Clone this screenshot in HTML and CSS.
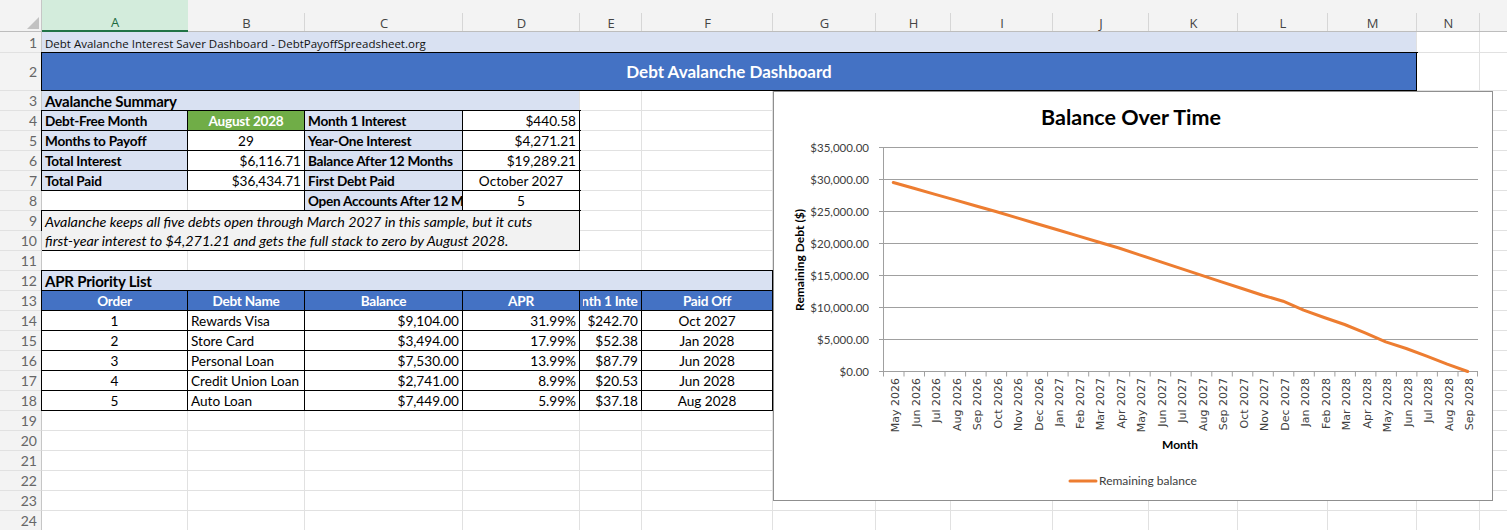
FILE: index.html
```html
<!DOCTYPE html>
<html lang="en">
<head>
  <meta charset="UTF-8">
  <title>Debt Avalanche Interest Saver Dashboard</title>
  <link rel="stylesheet" href="styles.css">
</head>
<body>
<div class="sheet">
  <table class="grid">
    <colgroup>
      <col class="c0"><col class="ca"><col class="cb"><col class="cc"><col class="cd"><col class="ce"><col class="cf"><col class="cg">
      <col class="ch"><col class="ci"><col class="cj"><col class="ck"><col class="cl"><col class="cm"><col class="cn"><col class="co">
    </colgroup>
    <tr class="colhead">
      <th class="corner"><span class="tri"></span></th>
      <th class="sel">A</th><th>B</th><th>C</th><th>D</th><th>E</th><th>F</th><th>G</th>
      <th>H</th><th>I</th><th>J</th><th>K</th><th>L</th><th>M</th><th>N</th><th></th>
    </tr>
    <tr class="r1">
      <th class="rh">1</th>
      <td colspan="13" class="lb caption">Debt Avalanche Interest Saver Dashboard - DebtPayoffSpreadsheet.org</td>
      <td></td><td></td>
    </tr>
    <tr class="r2">
      <th class="rh">2</th>
      <td colspan="13" class="banner bx">Debt Avalanche Dashboard</td>
      <td></td><td></td>
    </tr>
    <tr>
      <th class="rh">3</th>
      <td colspan="4" class="lb sec">Avalanche Summary</td>
      <td></td><td></td><td></td><td></td><td></td><td></td><td></td><td></td><td></td><td></td><td></td>
    </tr>
    <tr>
      <th class="rh">4</th>
      <td class="lb b bx">Debt-Free Month</td>
      <td class="good b ctr bx">August 2028</td>
      <td class="lb b bx">Month 1 Interest</td>
      <td class="num bx">$440.58</td>
      <td></td><td></td><td></td><td></td><td></td><td></td><td></td><td></td><td></td><td></td><td></td>
    </tr>
    <tr>
      <th class="rh">5</th>
      <td class="lb b bx">Months to Payoff</td>
      <td class="ctr bx">29</td>
      <td class="lb b bx">Year-One Interest</td>
      <td class="num bx">$4,271.21</td>
      <td></td><td></td><td></td><td></td><td></td><td></td><td></td><td></td><td></td><td></td><td></td>
    </tr>
    <tr>
      <th class="rh">6</th>
      <td class="lb b bx">Total Interest</td>
      <td class="num bx">$6,116.71</td>
      <td class="lb b bx">Balance After 12 Months</td>
      <td class="num bx">$19,289.21</td>
      <td></td><td></td><td></td><td></td><td></td><td></td><td></td><td></td><td></td><td></td><td></td>
    </tr>
    <tr>
      <th class="rh">7</th>
      <td class="lb b bx">Total Paid</td>
      <td class="num bx">$36,434.71</td>
      <td class="lb b bx">First Debt Paid</td>
      <td class="ctr bx">October 2027</td>
      <td></td><td></td><td></td><td></td><td></td><td></td><td></td><td></td><td></td><td></td><td></td>
    </tr>
    <tr>
      <th class="rh">8</th>
      <td></td><td></td>
      <td class="lb b bx">Open Accounts After 12 Months</td>
      <td class="ctr bx">5</td>
      <td></td><td></td><td></td><td></td><td></td><td></td><td></td><td></td><td></td><td></td><td></td>
    </tr>
    <tr>
      <th class="rh">9</th>
      <td colspan="4" rowspan="2" class="note bx">Avalanche keeps all five debts open through March 2027 in this sample, but it cuts<br>first-year interest to $4,271.21 and gets the full stack to zero by August 2028.</td>
      <td></td><td></td><td></td><td></td><td></td><td></td><td></td><td></td><td></td><td></td><td></td>
    </tr>
    <tr>
      <th class="rh">10</th>
      <td></td><td></td><td></td><td></td><td></td><td></td><td></td><td></td><td></td><td></td><td></td>
    </tr>
    <tr>
      <th class="rh">11</th>
      <td></td><td></td><td></td><td></td><td></td><td></td><td></td><td></td><td></td><td></td><td></td><td></td><td></td><td></td><td></td>
    </tr>
    <tr>
      <th class="rh">12</th>
      <td colspan="6" class="lb sec bx">APR Priority List</td>
      <td></td><td></td><td></td><td></td><td></td><td></td><td></td><td></td><td></td>
    </tr>
    <tr>
      <th class="rh">13</th>
      <td class="head bx"><div class="clip">Order</div></td>
      <td class="head bx"><div class="clip">Debt Name</div></td>
      <td class="head bx"><div class="clip">Balance</div></td>
      <td class="head bx"><div class="clip">APR</div></td>
      <td class="head bx"><div class="clip">Month 1 Interest</div></td>
      <td class="head bx"><div class="clip">Paid Off</div></td>
      <td></td><td></td><td></td><td></td><td></td><td></td><td></td><td></td><td></td>
    </tr>
    <tr>
      <th class="rh">14</th>
      <td class="ctr bx">1</td><td class="bx">Rewards Visa</td><td class="num bx">$9,104.00</td>
      <td class="num bx">31.99%</td><td class="num bx">$242.70</td><td class="ctr bx">Oct 2027</td>
      <td></td><td></td><td></td><td></td><td></td><td></td><td></td><td></td><td></td>
    </tr>
    <tr>
      <th class="rh">15</th>
      <td class="ctr bx">2</td><td class="bx">Store Card</td><td class="num bx">$3,494.00</td>
      <td class="num bx">17.99%</td><td class="num bx">$52.38</td><td class="ctr bx">Jan 2028</td>
      <td></td><td></td><td></td><td></td><td></td><td></td><td></td><td></td><td></td>
    </tr>
    <tr>
      <th class="rh">16</th>
      <td class="ctr bx">3</td><td class="bx">Personal Loan</td><td class="num bx">$7,530.00</td>
      <td class="num bx">13.99%</td><td class="num bx">$87.79</td><td class="ctr bx">Jun 2028</td>
      <td></td><td></td><td></td><td></td><td></td><td></td><td></td><td></td><td></td>
    </tr>
    <tr>
      <th class="rh">17</th>
      <td class="ctr bx">4</td><td class="bx">Credit Union Loan</td><td class="num bx">$2,741.00</td>
      <td class="num bx">8.99%</td><td class="num bx">$20.53</td><td class="ctr bx">Jun 2028</td>
      <td></td><td></td><td></td><td></td><td></td><td></td><td></td><td></td><td></td>
    </tr>
    <tr>
      <th class="rh">18</th>
      <td class="ctr bx">5</td><td class="bx">Auto Loan</td><td class="num bx">$7,449.00</td>
      <td class="num bx">5.99%</td><td class="num bx">$37.18</td><td class="ctr bx">Aug 2028</td>
      <td></td><td></td><td></td><td></td><td></td><td></td><td></td><td></td><td></td>
    </tr>
    <tr><th class="rh">19</th><td></td><td></td><td></td><td></td><td></td><td></td><td></td><td></td><td></td><td></td><td></td><td></td><td></td><td></td><td></td></tr>
    <tr><th class="rh">20</th><td></td><td></td><td></td><td></td><td></td><td></td><td></td><td></td><td></td><td></td><td></td><td></td><td></td><td></td><td></td></tr>
    <tr><th class="rh">21</th><td></td><td></td><td></td><td></td><td></td><td></td><td></td><td></td><td></td><td></td><td></td><td></td><td></td><td></td><td></td></tr>
    <tr><th class="rh">22</th><td></td><td></td><td></td><td></td><td></td><td></td><td></td><td></td><td></td><td></td><td></td><td></td><td></td><td></td><td></td></tr>
    <tr><th class="rh">23</th><td></td><td></td><td></td><td></td><td></td><td></td><td></td><td></td><td></td><td></td><td></td><td></td><td></td><td></td><td></td></tr>
    <tr><th class="rh">24</th><td></td><td></td><td></td><td></td><td></td><td></td><td></td><td></td><td></td><td></td><td></td><td></td><td></td><td></td><td></td></tr>
  </table>

  <!-- chart floats over G3:N23 like an embedded Excel chart -->
  <div class="chart">
    <svg width="718" height="408" viewBox="0 0 718 408">
      <text class="ch-title" x="357" y="33" text-anchor="middle">Balance Over Time</text>

      <g class="gridlines">
        <line x1="109" y1="55.5" x2="704" y2="55.5"/>
        <line x1="109" y1="87.5" x2="704" y2="87.5"/>
        <line x1="109" y1="119.5" x2="704" y2="119.5"/>
        <line x1="109" y1="151.5" x2="704" y2="151.5"/>
        <line x1="109" y1="183.5" x2="704" y2="183.5"/>
        <line x1="109" y1="215.5" x2="704" y2="215.5"/>
        <line x1="109" y1="247.5" x2="704" y2="247.5"/>
        <line x1="105" y1="279.5" x2="704" y2="279.5"/>
        <line x1="109.5" y1="55.5" x2="109.5" y2="279.5"/>
        <line x1="105" y1="55.5" x2="109" y2="55.5"/>
        <line x1="105" y1="87.5" x2="109" y2="87.5"/>
        <line x1="105" y1="119.5" x2="109" y2="119.5"/>
        <line x1="105" y1="151.5" x2="109" y2="151.5"/>
        <line x1="105" y1="183.5" x2="109" y2="183.5"/>
        <line x1="105" y1="215.5" x2="109" y2="215.5"/>
        <line x1="105" y1="247.5" x2="109" y2="247.5"/>
      </g>
      <path class="ticks" d="M109.5 279.5v5 M130 279.5v5 M150.5 279.5v5 M171 279.5v5 M191.6 279.5v5 M212.1 279.5v5 M232.6 279.5v5 M253.1 279.5v5 M273.6 279.5v5 M294.1 279.5v5 M314.7 279.5v5 M335.2 279.5v5 M355.7 279.5v5 M376.2 279.5v5 M396.7 279.5v5 M417.2 279.5v5 M437.8 279.5v5 M458.3 279.5v5 M478.8 279.5v5 M499.3 279.5v5 M519.8 279.5v5 M540.3 279.5v5 M560.9 279.5v5 M581.4 279.5v5 M601.9 279.5v5 M622.4 279.5v5 M642.9 279.5v5 M663.4 279.5v5 M684 279.5v5 M703.5 279.5v5"/>

      <g class="ylbl" text-anchor="end">
        <text x="95" y="59.5">$35,000.00</text>
        <text x="95" y="91.5">$30,000.00</text>
        <text x="95" y="123.5">$25,000.00</text>
        <text x="95" y="155.5">$20,000.00</text>
        <text x="95" y="187.5">$15,000.00</text>
        <text x="95" y="219.5">$10,000.00</text>
        <text x="95" y="251.5">$5,000.00</text>
        <text x="95" y="283.5">$0.00</text>
      </g>
      <text class="ax-title" transform="translate(30 168) rotate(-90)" text-anchor="middle">Remaining Debt ($)</text>

      <g class="xlbl" text-anchor="end">
        <text transform="translate(125 286) rotate(-90)">May 2026</text>
        <text transform="translate(145.5 286) rotate(-90)">Jun 2026</text>
        <text transform="translate(166 286) rotate(-90)">Jul 2026</text>
        <text transform="translate(186.5 286) rotate(-90)">Aug 2026</text>
        <text transform="translate(207 286) rotate(-90)">Sep 2026</text>
        <text transform="translate(227.5 286) rotate(-90)">Oct 2026</text>
        <text transform="translate(248.1 286) rotate(-90)">Nov 2026</text>
        <text transform="translate(268.6 286) rotate(-90)">Dec 2026</text>
        <text transform="translate(289.1 286) rotate(-90)">Jan 2027</text>
        <text transform="translate(309.6 286) rotate(-90)">Feb 2027</text>
        <text transform="translate(330.1 286) rotate(-90)">Mar 2027</text>
        <text transform="translate(350.6 286) rotate(-90)">Apr 2027</text>
        <text transform="translate(371.2 286) rotate(-90)">May 2027</text>
        <text transform="translate(391.7 286) rotate(-90)">Jun 2027</text>
        <text transform="translate(412.2 286) rotate(-90)">Jul 2027</text>
        <text transform="translate(432.7 286) rotate(-90)">Aug 2027</text>
        <text transform="translate(453.2 286) rotate(-90)">Sep 2027</text>
        <text transform="translate(473.7 286) rotate(-90)">Oct 2027</text>
        <text transform="translate(494.3 286) rotate(-90)">Nov 2027</text>
        <text transform="translate(514.8 286) rotate(-90)">Dec 2027</text>
        <text transform="translate(535.3 286) rotate(-90)">Jan 2028</text>
        <text transform="translate(555.8 286) rotate(-90)">Feb 2028</text>
        <text transform="translate(576.3 286) rotate(-90)">Mar 2028</text>
        <text transform="translate(596.8 286) rotate(-90)">Apr 2028</text>
        <text transform="translate(617.4 286) rotate(-90)">May 2028</text>
        <text transform="translate(637.9 286) rotate(-90)">Jun 2028</text>
        <text transform="translate(658.4 286) rotate(-90)">Jul 2028</text>
        <text transform="translate(678.9 286) rotate(-90)">Aug 2028</text>
        <text transform="translate(699.4 286) rotate(-90)">Sep 2028</text>
      </g>
      <text class="ax-title" x="406" y="357" text-anchor="middle">Month</text>

      <polyline class="series" points="119.3,90.5 139.8,96.3 160.3,102.1 180.8,107.9 201.3,113.7 221.8,119.5 242.4,125.6 262.9,131.7 283.4,137.7 303.9,143.9 324.4,150 344.9,156 365.5,162.8 386,169.6 406.5,176.4 427,183.1 447.5,189.9 468,196.5 488.6,203.2 509.1,209.2 529.6,218.2 550.1,225.5 570.6,232.5 591.1,240.9 611.7,249.9 632.2,256.5 652.7,264.2 673.2,272.2 693.7,279.5"/>

      <line class="series" x1="296" y1="389" x2="322" y2="389"/>
      <text class="legend" x="325" y="393">Remaining balance</text>
    </svg>
  </div>
</div>
</body>
</html>
```

FILE: styles.css
```css
body {
  margin: 0;
  background: #fff;
  overflow: hidden;
  font-family: Lato, "Liberation Sans", sans-serif;
}
.sheet {
  position: relative;
  width: 1507px;
  height: 530px;
  overflow: hidden;
}
.grid {
  table-layout: fixed;
  border-collapse: separate;
  border-spacing: 0;
  width: 1520px;
  font-size: 13.6px;
  color: #000;
}
.c0 { width: 42px; }
.ca { width: 146px; }
.cb { width: 117px; }
.cc { width: 158px; }
.cd { width: 117px; }
.ce { width: 62px; }
.cf { width: 131px; }
.cg { width: 103px; }
.ch { width: 75px; }
.ci { width: 102px; }
.cj { width: 96px; }
.ck { width: 89px; }
.cl { width: 90px; }
.cm { width: 89px; }
.cn { width: 63px; }
.co { width: 40px; }

.grid td {
  box-sizing: border-box;
  height: 20px;
  padding: 1px 3px 0;
  border-right: 1px solid #e1e1e1;
  border-bottom: 1px solid #e1e1e1;
  background: #fff;
  white-space: nowrap;
  overflow: hidden;
  line-height: 18px;
}

/* column letters */
.colhead th {
  box-sizing: border-box;
  height: 32px;
  padding: 14px 0 0;
  background: #f3f3f3 linear-gradient(#d6d6d6, #d6d6d6) right bottom / 1px 18px no-repeat;
  border-bottom: 1px solid #bdbdbd;
  font: 13px "Open Sans", sans-serif;
  color: #444;
  line-height: 16px;
  text-align: center;
}
.colhead th.corner {
  position: relative;
  border-right: 1px solid #c6c6c6;
  background: #f3f3f3;
}
.tri {
  position: absolute;
  right: 2px;
  bottom: 2px;
  width: 0;
  height: 0;
  border-left: 12px solid transparent;
  border-bottom: 12px solid #c2c2c2;
}
.colhead th.sel {
  background: #d3ecdc;
  border-bottom: 2px solid #217346;
  color: #1d6b3f;
}

/* row numbers */
.rh {
  box-sizing: border-box;
  height: 20px;
  padding: 1px 4px 0 0;
  background: #f3f3f3;
  border-right: 1px solid #c6c6c6;
  border-bottom: 1px solid #e1e1e1;
  font-weight: normal;
  font-size: 14px;
  line-height: 18px;
  color: #666;
  text-align: right;
}
.r1 td, .r1 .rh { height: 21px; }
.r2 td, .r2 .rh { height: 38px; }

.b {
  font-weight: bold;
  letter-spacing: -0.25px;
}
.ctr { text-align: center; }
.num { text-align: right; }
.lb { background: #d9e1f2 !important; }

.bx {
  border-right-color: #000 !important;
  border-bottom-color: #000 !important;
  box-shadow: 0 0 0 1px #000;
}

.caption {
  padding-top: 3px !important;
  font: 11.5px "Open Sans", sans-serif;
  line-height: 17px !important;
  color: #111;
}
.banner {
  background: #4472c4 !important;
  color: #fff;
  font-weight: bold;
  font-size: 17px;
  text-align: center;
}
.sec {
  font-weight: bold;
  font-size: 15px;
  letter-spacing: -0.2px;
}
.good {
  background: #70ad47 !important;
  color: #fff;
}
.note {
  background: #f2f2f2 !important;
  font-style: italic;
  font-size: 14.3px;
  line-height: 19px !important;
  vertical-align: top;
}
.head {
  background: #4472c4 !important;
  color: #fff;
  font-weight: bold;
  letter-spacing: -0.25px;
}
.clip {
  display: flex;
  justify-content: center;
  overflow: hidden;
}

/* embedded chart */
.chart {
  position: absolute;
  left: 773px;
  top: 91px;
  width: 720px;
  height: 410px;
  box-sizing: border-box;
  border: 1px solid #8f8f8f;
  background: #fff;
}
.chart svg {
  display: block;
}
.ch-title {
  font: bold 21.5px Lato, sans-serif;
  fill: #000;
}
.gridlines line {
  stroke: #a0a0a0;
  stroke-width: 1;
}
.ticks {
  stroke: #a0a0a0;
  stroke-width: 1;
}
.ylbl text {
  font: 11.5px Lato, sans-serif;
  fill: #404040;
}
.xlbl text {
  font: 11px "DejaVu Sans", sans-serif;
  fill: #404040;
}
.ax-title {
  font: bold 12px Lato, sans-serif;
  fill: #000;
}
.legend {
  font: 12px Lato, sans-serif;
  fill: #404040;
}
.series {
  fill: none;
  stroke: #ed7d31;
  stroke-width: 3;
  stroke-linejoin: round;
  stroke-linecap: round;
}
```
